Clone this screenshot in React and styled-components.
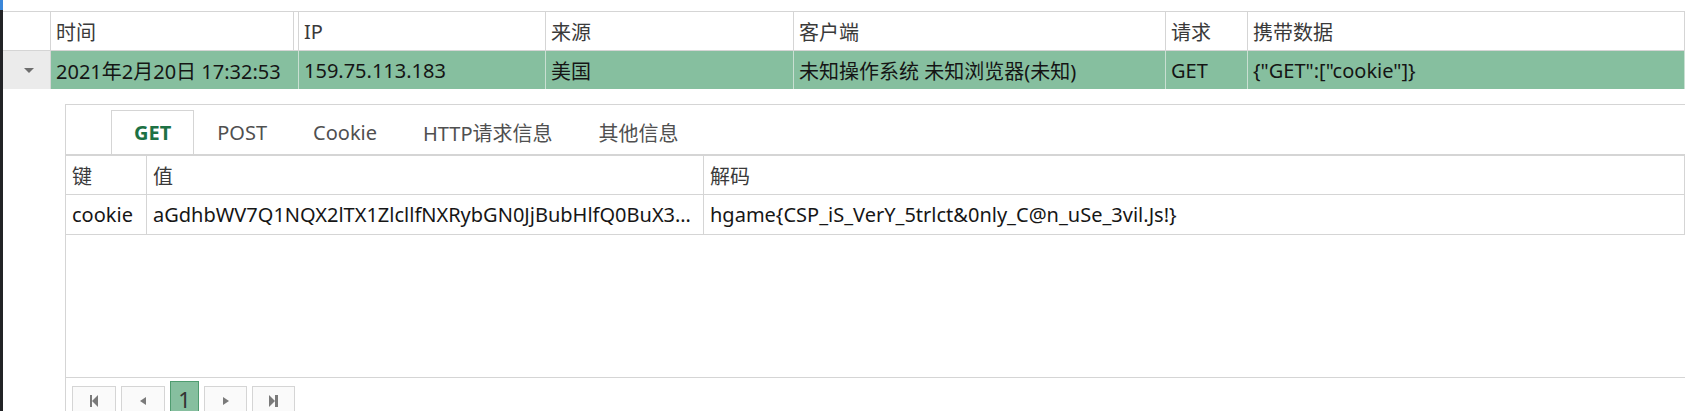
import styled, { createGlobalStyle } from "styled-components";

const GlobalStyle = createGlobalStyle`
  * { box-sizing: border-box; }
  html, body {
    margin: 0;
    padding: 0;
    background: #fff;
    overflow: hidden;
  }
  body {
    font-family: "Noto Sans", "Noto Sans CJK SC", sans-serif;
    color: #161616;
  }
`;

const LINE = "#d5d5d5";
const GREEN = "#86bf9f";

const Page = styled.div`
  display: flex;
  height: 411px;
`;

const EdgeStrip = styled.div`
  flex: none;
  width: 3px;
  background: linear-gradient(#3b87d9 0 10px, #222326 10px);
`;

const Main = styled.div`
  flex: 1;
  min-width: 0;
  padding-top: 11px;
  display: flex;
  flex-direction: column;
`;

const LogGrid = styled.div`
  display: grid;
  grid-template-columns: 48px 248px 247px 248px 372px 82px 1fr;
  border-top: 1px solid ${LINE};
`;

const HeadCell = styled.div`
  height: 39px;
  padding-left: 5px;
  display: flex;
  align-items: center;
  font-size: 20px;
  color: #3a3a3a;
  white-space: nowrap;
  overflow: hidden;
  border-right: 1px solid ${LINE};
  border-bottom: 1px solid ${LINE};
  ${(p) => p.$split && `box-shadow: inset -4px 0 0 #fff, inset -5px 0 0 ${LINE};`}
`;

const DataCell = styled.div`
  height: 38px;
  padding-left: 5px;
  display: flex;
  align-items: center;
  font-size: 20px;
  color: #151515;
  white-space: nowrap;
  overflow: hidden;
  background: ${(p) => (p.$expander ? "#ebebeb" : GREEN)};
  border-right: 1px solid ${(p) => (p.$expander ? LINE : "#c9dfd2")};
  justify-content: ${(p) => (p.$expander ? "center" : "flex-start")};
`;

const Caret = styled.span`
  width: 0;
  height: 0;
  border-left: 5px solid transparent;
  border-right: 5px solid transparent;
  border-top: 5px solid #6e6e6e;
`;

const DetailWrap = styled.div`
  flex: 1;
  min-height: 0;
  display: flex;
  padding: 15px 0 0 62px;
`;

const Panel = styled.div`
  flex: 1;
  min-width: 0;
  display: flex;
  flex-direction: column;
  border-left: 1px solid ${LINE};
  border-top: 1px solid ${LINE};
`;

const TabBar = styled.div`
  flex: none;
  height: 49px;
  padding-left: 45px;
  display: flex;
  align-items: flex-end;
`;

const Tab = styled.div`
  height: 44px;
  padding: 0 22px;
  display: flex;
  align-items: center;
  font-size: 20px;
  white-space: nowrap;
  color: ${(p) => (p.$active ? "#1d7144" : "#505050")};
  font-weight: ${(p) => (p.$active ? 700 : 400)};
  border: 1px solid ${(p) => (p.$active ? LINE : "transparent")};
  border-bottom: none;
  background: #fff;
`;

const TableArea = styled.div`
  flex: 1;
  min-height: 0;
  border-top: 2px solid ${LINE};
`;

const KvGrid = styled.div`
  display: grid;
  grid-template-columns: 81px 557px 1fr;
`;

const KvCell = styled.div`
  height: ${(p) => (p.$head ? 39 : 40)}px;
  padding-left: 6px;
  padding-right: 4px;
  display: flex;
  align-items: center;
  font-size: 20px;
  color: ${(p) => (p.$head ? "#3a3a3a" : "#161616")};
  border-right: 1px solid ${LINE};
  border-bottom: 1px solid ${LINE};
  min-width: 0;
  overflow: hidden;
`;

const Clip = styled.span`
  display: block;
  min-width: 0;
  white-space: nowrap;
  overflow: hidden;
  text-overflow: ellipsis;
`;

const Pager = styled.div`
  flex: none;
  height: 34px;
  border-top: 1px solid ${LINE};
  padding: 8px 0 0 6px;
  display: flex;
  align-items: flex-start;
  gap: 5px;
`;

const PageButton = styled.div`
  flex: none;
  width: ${(p) => p.$w}px;
  height: ${(p) => (p.$active ? 36 : 30)}px;
  margin-top: ${(p) => (p.$active ? -5 : 0)}px;
  display: flex;
  justify-content: center;
  align-items: ${(p) => (p.$active ? "flex-start" : "center")};
  padding-top: ${(p) => (p.$active ? 6 : 0)}px;
  font-size: 22px;
  line-height: 22px;
  color: #333;
  background: ${(p) => (p.$active ? GREEN : "#fafafa")};
  border: 1px solid ${(p) => (p.$active ? "#4f9c70" : LINE)};
  svg {
    display: block;
    fill: #7a7a7a;
  }
`;

const logColumns = ["时间", "IP", "来源", "客户端", "请求", "携带数据"];
const logRow = [
  "2021年2月20日 17:32:53",
  "159.75.113.183",
  "美国",
  "未知操作系统 未知浏览器(未知)",
  "GET",
  '{"GET":["cookie"]}',
];
const tabs = ["GET", "POST", "Cookie", "HTTP请求信息", "其他信息"];
const encoded = "aGdhbWV7Q1NQX2lTX1ZlcllfNXRybGN0JjBubHlfQ0BuX3VTZV8zdmlsLkpzIX0=";
const decoded = "hgame{CSP_iS_VerY_5trlct&0nly_C@n_uSe_3vil.Js!}";

const FirstIcon = () => (
  <svg width="8" height="12" viewBox="0 0 8 12">
    <rect x="0" y="0" width="2" height="12" />
    <polygon points="8,0 2,6 8,12" />
  </svg>
);
const PrevIcon = () => (
  <svg width="6" height="8" viewBox="0 0 6 8">
    <polygon points="6,0 0,4 6,8" />
  </svg>
);
const NextIcon = () => (
  <svg width="6" height="8" viewBox="0 0 6 8">
    <polygon points="0,0 6,4 0,8" />
  </svg>
);
const LastIcon = () => (
  <svg width="9" height="12" viewBox="0 0 9 12">
    <polygon points="0,0 6,6 0,12" />
    <rect x="6" y="0" width="3" height="12" />
  </svg>
);

const App = () => {
  return (
    <>
      <GlobalStyle />
      <Page>
        <EdgeStrip />
        <Main>
          <LogGrid>
            <HeadCell />
            {logColumns.map((c, i) => (
              <HeadCell key={c} $split={i === 0}>
                {c}
              </HeadCell>
            ))}
            <DataCell $expander>
              <Caret />
            </DataCell>
            {logRow.map((v, i) => (
              <DataCell key={i}>{v}</DataCell>
            ))}
          </LogGrid>

          <DetailWrap>
            <Panel>
              <TabBar>
                {tabs.map((t, i) => (
                  <Tab key={t} $active={i === 0}>
                    {t}
                  </Tab>
                ))}
              </TabBar>
              <TableArea>
                <KvGrid>
                  <KvCell $head>键</KvCell>
                  <KvCell $head>值</KvCell>
                  <KvCell $head>解码</KvCell>
                  <KvCell>cookie</KvCell>
                  <KvCell>
                    <Clip>{encoded}</Clip>
                  </KvCell>
                  <KvCell>
                    <Clip>{decoded}</Clip>
                  </KvCell>
                </KvGrid>
              </TableArea>
              <Pager>
                <PageButton $w={44}>
                  <FirstIcon />
                </PageButton>
                <PageButton $w={44}>
                  <PrevIcon />
                </PageButton>
                <PageButton $w={29} $active>
                  1
                </PageButton>
                <PageButton $w={43}>
                  <NextIcon />
                </PageButton>
                <PageButton $w={43}>
                  <LastIcon />
                </PageButton>
              </Pager>
            </Panel>
          </DetailWrap>
        </Main>
      </Page>
    </>
  );
};

export default App;
